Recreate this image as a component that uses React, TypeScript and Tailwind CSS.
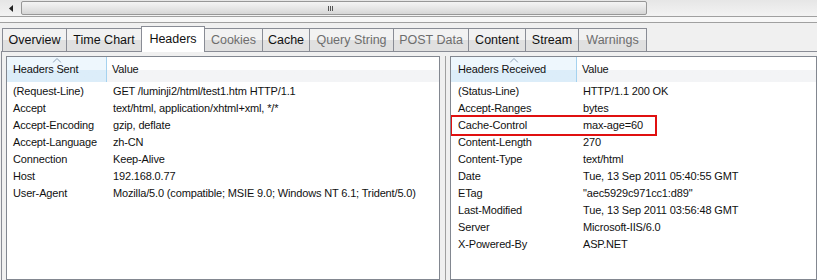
const font = "font-['Liberation_Sans',Arial,sans-serif]";

type Tab = { label: string; disabled?: boolean; selected?: boolean; width: number };

const tabs: Tab[] = [
  { label: "Overview", width: 65 },
  { label: "Time Chart", width: 76 },
  { label: "Headers", width: 64, selected: true },
  { label: "Cookies", width: 59, disabled: true },
  { label: "Cache", width: 48 },
  { label: "Query String", width: 85, disabled: true },
  { label: "POST Data", width: 76, disabled: true },
  { label: "Content", width: 58 },
  { label: "Stream", width: 54 },
  { label: "Warnings", width: 69, disabled: true },
];

const sent: [string, string][] = [
  ["(Request-Line)", "GET /luminji2/html/test1.htm HTTP/1.1"],
  ["Accept", "text/html, application/xhtml+xml, */*"],
  ["Accept-Encoding", "gzip, deflate"],
  ["Accept-Language", "zh-CN"],
  ["Connection", "Keep-Alive"],
  ["Host", "192.168.0.77"],
  ["User-Agent", "Mozilla/5.0 (compatible; MSIE 9.0; Windows NT 6.1; Trident/5.0)"],
];

const received: [string, string][] = [
  ["(Status-Line)", "HTTP/1.1 200 OK"],
  ["Accept-Ranges", "bytes"],
  ["Cache-Control", "max-age=60"],
  ["Content-Length", "270"],
  ["Content-Type", "text/html"],
  ["Date", "Tue, 13 Sep 2011 05:40:55 GMT"],
  ["ETag", "\"aec5929c971cc1:d89\""],
  ["Last-Modified", "Tue, 13 Sep 2011 03:56:48 GMT"],
  ["Server", "Microsoft-IIS/6.0"],
  ["X-Powered-By", "ASP.NET"],
];

function SortArrow() {
  return (
    <svg width="9" height="5" viewBox="0 0 9 5" className="absolute left-1/2 top-[1px] -translate-x-1/2">
      <path d="M0.5 4.5 L4.5 0.5 L8.5 4.5" fill="none" stroke="#8fa2b8" strokeWidth="1" />
    </svg>
  );
}

function ListView({
  title,
  rows,
  keyWidth,
  keyPad,
  highlight,
  className,
}: {
  title: string;
  rows: [string, string][];
  keyWidth: string;
  keyPad: string;
  highlight?: string;
  className: string;
}) {
  return (
    <div className={`flex flex-col overflow-hidden border border-[#828790] bg-white ${className}`}>
      <div className="flex h-[25px] shrink-0 bg-gradient-to-b from-white from-50% to-[#f3f4f6] to-50%">
        <div
          className={`relative flex shrink-0 items-center border-r border-[#a5d2ef] bg-gradient-to-b from-[#eef7fd] from-50% to-[#dcedf9] to-50% ${keyWidth} ${keyPad}`}
        >
          <SortArrow />
          {title}
        </div>
        <div className="flex items-center pl-[5px]">Value</div>
      </div>
      <div className="mt-[1px] flex flex-col">
        {rows.map(([k, v]) => (
          <div key={k} className="relative flex h-[17px] items-center">
            {highlight === k ? (
              <div className="absolute left-[-1px] top-[-2px] h-[21px] w-[207px] border-2 border-[#e01010]" />
            ) : null}
            <div className={`shrink-0 whitespace-nowrap ${keyWidth} ${keyPad}`}>{k}</div>
            <div className="whitespace-nowrap pl-[6px]">{v}</div>
          </div>
        ))}
      </div>
    </div>
  );
}

export default function App() {
  return (
    <div
      className={`h-[280px] w-[817px] overflow-hidden bg-[#f0f0f0] text-[11px] leading-none tracking-[-0.15px] text-[#111] ${font}`}
    >
      {/* horizontal scrollbar */}
      <div className="flex h-[17px] border-b border-[#a0a0a0] bg-gradient-to-b from-[#e6e6e6] to-[#f3f3f3]">
        <div className="flex w-[21px] items-center justify-center">
          <svg width="4" height="7" viewBox="0 0 4 7">
            <path d="M4 0 L0 3.5 L4 7 Z" fill="#222" />
          </svg>
        </div>
        <div className="relative mt-[1px] h-[14px] w-[626px] rounded-[2px] border border-[#979797] bg-gradient-to-b from-[#f4f4f4] via-[#e6e6e6] to-[#d6d6d6]">
          <div className="absolute left-[306px] top-[4px] flex gap-[1px]">
            <div className="h-[5px] w-[1px] bg-[#555]" />
            <div className="h-[5px] w-[1px] bg-[#555]" />
            <div className="h-[5px] w-[1px] bg-[#555]" />
          </div>
        </div>
      </div>
      <div className="h-[6px] border-b border-[#a0a0a0] bg-[#f7f7f7]" />

      {/* tab strip */}
      <div className="relative z-10 flex h-[28px] items-end pl-[2px] text-[12.5px] tracking-normal">
        {tabs.map((t) =>
          t.selected ? (
            <div
              key={t.label}
              style={{ width: t.width }}
              className="mb-[-1px] -ml-px flex h-[26px] shrink-0 items-center justify-center border border-b-0 border-[#898c95] bg-white pb-[1px]"
            >
              {t.label}
            </div>
          ) : (
            <div
              key={t.label}
              style={{ width: t.width }}
              className={`-ml-px flex h-[23px] shrink-0 items-center justify-center border border-b-0 border-[#898c95] bg-gradient-to-b from-[#f2f2f2] from-50% to-[#e0e0e0] to-50% first:ml-0 ${
                t.disabled ? "text-[#6d6d6d]" : "text-[#111]"
              }`}
            >
              {t.label}
            </div>
          ),
        )}
      </div>

      {/* tab page */}
      <div className="ml-[1px] flex h-[229px] gap-[2px] border-l border-t border-[#898c95] pl-[4px] pt-[4px]">
        <ListView
          title="Headers Sent"
          rows={sent}
          keyWidth="w-[100px]"
          keyPad="pl-[6px]"
          className="w-[434px]"
        />
        <div className="flex w-[6px] shrink-0 justify-center">
          <div className="h-full w-px bg-[#a0a0a0]" />
        </div>
        <ListView
          title="Headers Received"
          rows={received}
          keyWidth="w-[126px]"
          keyPad="pl-[7px]"
          highlight="Cache-Control"
          className="flex-1"
        />
      </div>
    </div>
  );
}
